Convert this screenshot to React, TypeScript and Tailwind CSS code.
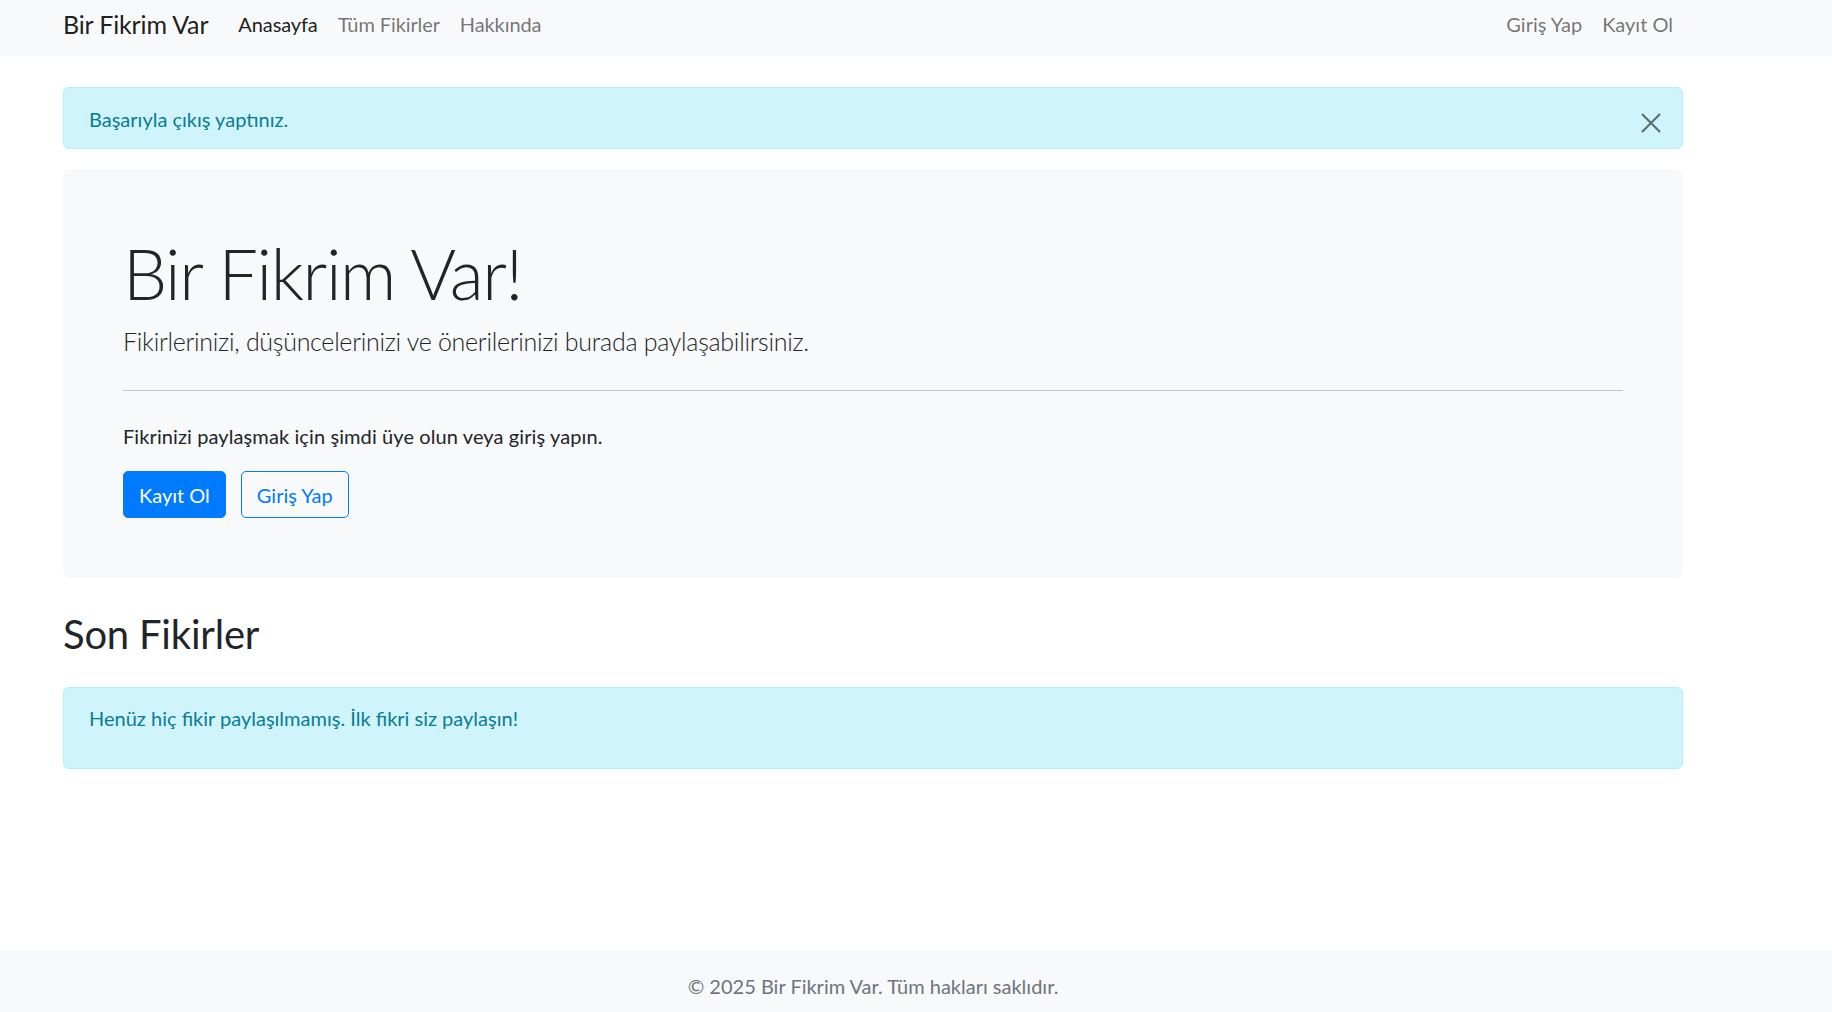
const navLinks = [
  { label: "Anasayfa", active: true },
  { label: "Tüm Fikirler", active: false },
  { label: "Hakkında", active: false },
];

function CloseIcon() {
  return (
    <svg width="20" height="20" viewBox="0 0 20 20" fill="none">
      <path d="M1 1 L19 19 M19 1 L1 19" stroke="#000" strokeOpacity="0.55" strokeWidth="2.2" />
    </svg>
  );
}

export default function App() {
  return (
    <div className="min-h-screen flex flex-col bg-white text-[#212529] font-['Lato',sans-serif]">
      {/* Navbar */}
      <nav className="bg-[#f8f9fa] h-[56px]">
        <div className="ml-[63px] w-[1620px] h-full flex items-center pb-[8px]">
          <a className="text-[25px] leading-[37px] tracking-[-0.15px] text-black/90 mr-[20px]">Bir Fikrim Var</a>
          <ul className="flex">
            {navLinks.map((link) => (
              <li key={link.label}>
                <a
                  className={`block px-[10px] text-[20px] leading-[30px] tracking-[-0.1px] ${
                    link.active ? "text-black/90" : "text-black/55"
                  }`}
                >
                  {link.label}
                </a>
              </li>
            ))}
          </ul>
          <ul className="flex ml-auto">
            <li>
              <a className="block px-[10px] text-[20px] leading-[30px] text-black/55">Giriş Yap</a>
            </li>
            <li>
              <a className="block px-[10px] text-[20px] leading-[30px] text-black/55">Kayıt Ol</a>
            </li>
          </ul>
        </div>
      </nav>

      <main className="ml-[63px] w-[1620px] pt-[31px]">
        {/* Logout alert */}
        <div className="relative bg-[#cff4fc] border border-[#b6effb] rounded-[6px] px-[25px] pt-[16px] pb-[14px] text-[#0a7c92] text-[20px] leading-[30px]">
          Başarıyla çıkış yaptınız.
          <button className="absolute right-[21px] top-[25px]">
            <CloseIcon />
          </button>
        </div>

        {/* Jumbotron */}
        <section className="mt-[20px] bg-[#f8f9fa] rounded-[8px] p-[60px]">
          <h1 className="text-[70px] leading-[84px] font-light tracking-[-1.4px] pt-[2px] mb-[8px]">Bir Fikrim Var!</h1>
          <p className="text-[25px] leading-[37px] font-light tracking-[-0.28px] mb-[30px]">
            Fikirlerinizi, düşüncelerinizi ve önerilerinizi burada paylaşabilirsiniz.
          </p>
          <hr className="border-0 h-px bg-[#c3c4c6] mb-[30px]" />
          <p className="text-[20px] leading-[30px] tracking-[0.1px] mb-[20px]">
            Fikrinizi paylaşmak için şimdi üye olun veya giriş yapın.
          </p>
          <div className="flex gap-[15px]">
            <a className="h-[47px] px-[15px] flex items-center border border-[#007bff] bg-[#007bff] text-white text-[20px] rounded-[5px]">
              Kayıt Ol
            </a>
            <a className="h-[47px] px-[15px] flex items-center border border-[#007bff] text-[#007bff] text-[20px] rounded-[5px]">
              Giriş Yap
            </a>
          </div>
        </section>

        {/* Recent ideas */}
        <h2 className="mt-[32px] text-[40px] leading-[48px] font-normal tracking-[-0.2px] mb-[29px]">Son Fikirler</h2>
        <div className="bg-[#cff4fc] border border-[#b6effb] rounded-[6px] px-[25px] py-[15px] text-[#0a7c92] text-[20px] leading-[30px]">
          <p className="mb-[20px]">Henüz hiç fikir paylaşılmamış. İlk fikri siz paylaşın!</p>
        </div>
      </main>

      {/* Footer */}
      <footer className="mt-auto bg-[#f8f9fa] h-[61px] pt-[20px]">
        <div className="ml-[63px] w-[1620px] text-center text-[20px] leading-[30px] text-[#6c757d]">
          © 2025 Bir Fikrim Var. Tüm hakları saklıdır.
        </div>
      </footer>
    </div>
  );
}
